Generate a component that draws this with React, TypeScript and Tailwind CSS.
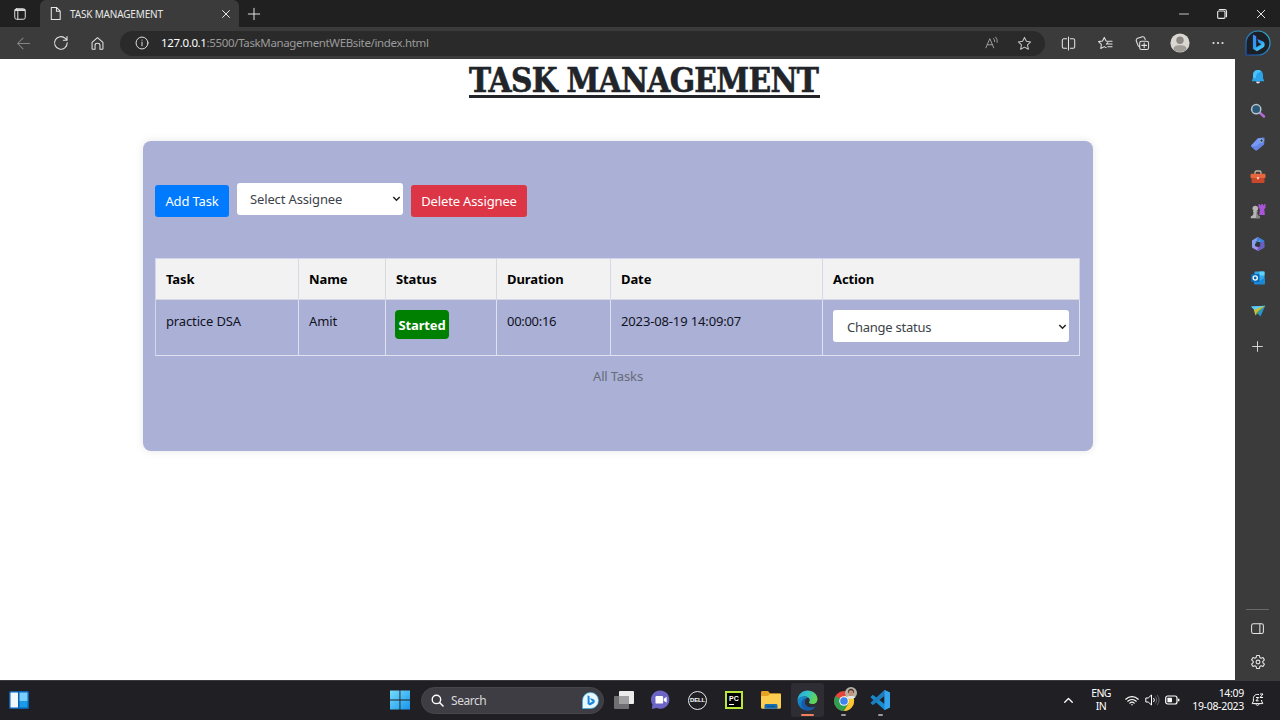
import React from "react";

type Children = { children?: React.ReactNode };

function Line({ children, size = 16, className = "" }: Children & { size?: number; className?: string }) {
  return (
    <svg width={size} height={size} viewBox="0 0 16 16" fill="none" stroke="currentColor" strokeWidth="1.1" strokeLinecap="round" strokeLinejoin="round" className={className}>
      {children}
    </svg>
  );
}

function ToolSlot({ children }: Children) {
  return <div className="flex w-[37px] items-center justify-center">{children}</div>;
}

function TabStrip() {
  return (
    <div className="flex h-[27px] shrink-0 bg-[#202020] text-[#e8e8e8]">
      <div className="flex w-10 items-center justify-center">
        <Line size={14}>
          <rect x="2" y="2" width="12" height="12" rx="2.2" />
          <path d="M2.5 4h11M2.5 3h11M5.5 5v9" />
        </Line>
      </div>
      <div className="flex w-[199px] items-center rounded-t-md bg-[#3b3b3b] pr-2 pl-2">
        <Line size={15}>
          <path d="M3.5 1.5h5.5l4 4v9H3.5zM9 1.5v4h4" />
        </Line>
        <span className="ml-[7px] flex-1 text-[10px] leading-[14px] tracking-[-0.17px] whitespace-nowrap">TASK MANAGEMENT</span>
        <Line size={10} className="shrink-0">
          <path d="M2.5 2.5l11 11M13.5 2.5l-11 11" strokeWidth="1.6" />
        </Line>
      </div>
      <div className="flex w-[30px] items-center justify-center">
        <Line size={14}>
          <path d="M8 1.5v13M1.5 8h13" />
        </Line>
      </div>
      <div className="ml-auto flex">
        <div className="flex w-[38px] items-center justify-center">
          <Line size={12}>
            <path d="M2 8h12" />
          </Line>
        </div>
        <div className="flex w-[38px] items-center justify-center">
          <Line size={12}>
            <rect x="2.2" y="4" width="9.8" height="9.8" rx="1.5" strokeWidth="1.5" />
            <path d="M4.5 2h7a2.5 2.5 0 0 1 2.5 2.5v7" strokeWidth="1.5" />
          </Line>
        </div>
        <div className="flex w-[39px] items-center justify-center">
          <Line size={12}>
            <path d="M3 3l10 10M13 3L3 13" strokeWidth="1.3" />
          </Line>
        </div>
      </div>
    </div>
  );
}

function BingGlyph() {
  return (
    <svg width="26" height="26" viewBox="0 0 26 26">
      <defs>
        <linearGradient id="ring" x1="0" y1="1" x2="1" y2="0">
          <stop offset="0" stopColor="#1454b8" />
          <stop offset="1" stopColor="#35b5cf" />
        </linearGradient>
        <linearGradient id="bing" x1="0" y1="0" x2="0.6" y2="1">
          <stop offset="0" stopColor="#3f86f5" />
          <stop offset="0.6" stopColor="#2b9cf2" />
          <stop offset="1" stopColor="#4ed0f4" />
        </linearGradient>
      </defs>
      <path d="M1 25V13A12 12 0 1 1 13 25Z" fill="#1c1f26" stroke="url(#ring)" strokeWidth="1.2" />
      <path d="M7.9 4.4l3.3 1.8v11l5.2-3-2.7-1.4-1.5-3.9 6 2.5c2 1.3 2 4.6 0 6l-6.300 3.800-4-2.500z" fill="url(#bing)" />
    </svg>
  );
}

function AddressBar() {
  return (
    <div className="flex h-8 shrink-0 items-center bg-[#3b3b3b] pl-[5px] text-[#e4e4e4]">
      <ToolSlot>
        <Line size={15} className="text-[#858585]">
          <path d="M14.5 8H1.8M7.5 2.2L1.7 8l5.8 5.8" />
        </Line>
      </ToolSlot>
      <ToolSlot>
        <Line size={16}>
          <path d="M14.2 7.8A6.3 6.3 0 1 1 12.3 3.4L14 5.1M14 1.6v3.6h-3.6" />
        </Line>
      </ToolSlot>
      <ToolSlot>
        <Line size={15}>
          <path d="M2.200 6.800L8 1.800l5.800 5V13.500c0 .4-.2.6-.6.6h-2.600V9.800c0-1.400-1-2-2.600-2s-2.600.6-2.600 2v4.300H2.800c-.4 0-.6-.2-.6-.6z" />
        </Line>
      </ToolSlot>
      <div className="ml-1 flex h-[25px] w-[925px] items-center rounded-full bg-[#2a2a2a]">
        <div className="flex w-[41px] items-center pl-[15px]">
          <Line size={14}>
            <circle cx="8" cy="8" r="6.8" />
            <path d="M8 7v4.2M8 4.6v.2" />
          </Line>
        </div>
        <span className="flex-1 text-[11.5px] leading-4 tracking-[-0.35px] whitespace-nowrap text-[#9b9b9b]">
          <span className="text-white">127.0.0.1</span>:5500/TaskManagementWEBsite/index.html
        </span>
        <div className="flex w-[33px] justify-center text-[#a0a0a0]">
          <Line size={14}>
            <path d="M1 13.5L5.5 3 10 13.5M2.6 10h5.8M9.8 2.8a4 4 0 0 1 1.3 3.6M12.2 1.2a7 7 0 0 1 1.8 6" />
          </Line>
        </div>
        <div className="mr-1 flex w-[33px] justify-center text-[#c4c4c4]">
          <Line size={15}>
            <path d="M8 1.5l2 4.2 4.6.6-3.4 3.2.9 4.6L8 11.9l-4.1 2.2.9-4.6L1.4 6.3 6 5.7z" />
          </Line>
        </div>
      </div>
      <div className="ml-[5px] flex">
        <ToolSlot>
          <Line size={15}>
            <path d="M6 3H3a1.6 1.6 0 0 0-1.6 1.6v6.8A1.6 1.6 0 0 0 3 13h3M10 3h3a1.6 1.6 0 0 1 1.6 1.6v6.8A1.6 1.6 0 0 1 13 13h-3M8 1v14" />
          </Line>
        </ToolSlot>
        <ToolSlot>
          <Line size={15}>
            <path d="M10.2 5.6l-1.6-.2L6.7 1.5 4.8 5.4l-4.2.6 3 3-.7 4.4L6.7 11.3l2 1.1M9 8.7L10.5 7M11 5.5h4M10.5 8.5H15M10.5 11.5H15" />
          </Line>
        </ToolSlot>
        <ToolSlot>
          <Line size={15}>
            <rect x="5" y="5.5" width="9.5" height="9" rx="2" />
            <path d="M9.8 7.5v5M7.3 10h5M4.900 11.600L3.400 10.500 1.400 5.400C1 4 1.600 3 2.800 2.500l5-1.600c1.300-.3 2.200.3 2.600 1.400l.5 1.400" />
          </Line>
        </ToolSlot>
        <ToolSlot>
          <svg width="20" height="20" viewBox="0 0 20 20">
            <circle cx="10" cy="10" r="9.6" fill="#dad6d2" />
            <circle cx="10" cy="7.3" r="3.7" fill="#8b8783" />
            <path d="M3.5 16.5c0-3 2-4.3 6.5-4.3s6.5 1.3 6.5 4.3a9.5 9.5 0 0 1-13 0z" fill="#a09c98" />
          </svg>
        </ToolSlot>
        <ToolSlot>
          <svg width="14" height="4" viewBox="0 0 14 4" fill="#e4e4e4" className="ml-[3px]">
            <circle cx="2.500" cy="2" r="1.100" />
            <circle cx="7" cy="2" r="1.100" />
            <circle cx="11.500" cy="2" r="1.100" />
          </svg>
        </ToolSlot>
      </div>
      <div className="flex flex-1 justify-center">
        <BingGlyph />
      </div>
    </div>
  );
}

function Caret() {
  return (
    <svg width="9" height="6" viewBox="0 0 9 6" fill="none" stroke="#222" strokeWidth="1.5">
      <path d="M1.300 1l3.200 3.200L7.700 1" />
    </svg>
  );
}

function SelectBox({ label, className }: { label: string; className: string }) {
  return (
    <button className={"flex items-center justify-between rounded-[3px] bg-white text-left text-[#3c424a] " + className}>
      <span>{label}</span>
      <Caret />
    </button>
  );
}

const heads = ["Task", "Name", "Status", "Duration", "Date", "Action"];

function TaskTable() {
  return (
    <table className="w-[925px] table-fixed border-separate border-spacing-0 border-t border-l border-[#d3d6ea] text-black">
      <colgroup>
        <col className="w-[143px]" />
        <col className="w-[87px]" />
        <col className="w-[111px]" />
        <col className="w-[114px]" />
        <col className="w-[212px]" />
        <col className="w-[257px]" />
      </colgroup>
      <thead>
        <tr className="h-[41px] bg-[#f2f2f2]">
          {heads.map((h) => (
            <th key={h} className="border-r border-b border-[#d6d8e2] p-0 pl-[10px] text-left font-bold tracking-[-0.1px]">
              {h}
            </th>
          ))}
        </tr>
      </thead>
      <tbody>
        <tr className="h-14 align-top text-[#11131f]">
          <td className="border-r border-b border-[#dfe1f0] p-0 pt-[11px] pl-[10px]">practice DSA</td>
          <td className="border-r border-b border-[#dfe1f0] p-0 pt-[11px] pl-[10px]">Amit</td>
          <td className="border-r border-b border-[#dfe1f0] p-0 pt-[10px] pl-[9px]">
            <div className="flex h-[29px] w-[54px] items-center justify-center rounded-[4px] bg-[#008000] font-bold text-white">Started</div>
          </td>
          <td className="border-r border-b border-[#dfe1f0] p-0 pt-[11px] pl-[10px] tracking-[-0.3px]">00:00:16</td>
          <td className="border-r border-b border-[#dfe1f0] p-0 pt-[11px] pl-[10px]">2023-08-19 14:09:07</td>
          <td className="border-r border-b border-[#dfe1f0] p-0 pt-[10px] pl-[10px]">
            <SelectBox label="Change status" className="h-8 w-[236px] pt-[2px] pr-[2px] pl-[14px] tracking-[-0.25px]" />
          </td>
        </tr>
      </tbody>
    </table>
  );
}

function Page() {
  return (
    <main className="w-[1235px] bg-white">
      <h1 className="ml-[469px] flex h-[82px] items-start">
        <span className="w-[351px] border-b-[3px] border-[#212529] pt-[8px] font-['DejaVu_Serif_Condensed','DejaVu_Serif',serif] text-[33px] leading-[28px] font-bold tracking-[-0.7px] whitespace-nowrap text-[#212529] [-webkit-text-stroke:0.6px_#212529]">TASK MANAGEMENT</span>
      </h1>
      <section className="ml-[143px] h-[310px] w-[950px] rounded-lg bg-[#abb0d6] px-3 pt-[42px] text-[13px] leading-5 tracking-[-0.14px] shadow-[0_0_8px_rgba(0,0,0,0.1)]">
        <div className="flex h-[75px] items-start gap-2">
          <button className="mt-[2px] h-8 w-[74px] rounded-[3px] bg-[#007bff] text-white">Add Task</button>
          <SelectBox label="Select Assignee" className="h-8 w-[166px] pr-[2px] pl-[13px]" />
          <button className="mt-[2px] h-8 w-[116px] rounded-[3px] bg-[#dc3545] text-white">Delete Assignee</button>
        </div>
        <TaskTable />
        <p className="mt-[10px] text-center text-[#666c78]">All Tasks</p>
      </section>
    </main>
  );
}

function SideSlot({ children }: Children) {
  return <div className="flex h-[33.4px] items-center justify-center">{children}</div>;
}

function Sidebar() {
  return (
    <aside className="flex flex-1 flex-col bg-[#3b3b3b] pt-[1.5px] text-[#e4e4e4]">
      <SideSlot>
        <svg width="14" height="16" viewBox="0 0 14 16">
          <path d="M5 12.5h4a2 2 0 0 1-4 0z" fill="#e0e4ea" />
          <path d="M7 1c3 0 5 2.2 5 5v3l1.3 3.2H.7L2 9V6c0-2.8 2-5 5-5z" fill="#2ba3ea" />
          <path d="M2 9V6c0-2.8 2-5 5-5 1.5 0 2.5.5 3.5 1.500C7 3 5 5 5 9z" fill="#4cc0f8" />
        </svg>
      </SideSlot>
      <SideSlot>
        <svg width="16" height="16" viewBox="0 0 16 16" fill="none">
          <path d="M9.500 9.500l4.500 4" stroke="#b06ad0" strokeWidth="2.600" strokeLinecap="round" />
          <circle cx="6.200" cy="6.200" r="4.600" fill="#2b5a78" stroke="#b8c4ca" strokeWidth="1.500" />
        </svg>
      </SideSlot>
      <SideSlot>
        <svg width="16" height="16" viewBox="0 0 16 16">
          <path d="M1.600 9L8 2.200l5.500-.7c.8 0 1.200.4 1.100 1.100l-.5 6-6.900 5.600c-.7.6-1.400.6-2 0L1.600 11c-.6-.7-.6-1.300 0-2z" fill="#6584e8" />
          <path d="M1.600 9L8 2.200l2.500-.3L14 4 6.600 10 1.500 10.500c-.3-.5-.3-1 .1-1.500z" fill="#7798f5" />
          <circle cx="11.500" cy="4.600" r="1.500" fill="#223058" stroke="#b5d5c8" strokeWidth=".7" />
        </svg>
      </SideSlot>
      <SideSlot>
        <svg width="16" height="16" viewBox="0 0 16 16">
          <path d="M5 5V3.600C5 2.600 5.600 2 6.600 2h2.800c1 0 1.600.6 1.600 1.600V5" fill="none" stroke="#c6b5a5" strokeWidth="1.300" />
          <rect x=".5" y="4.700" width="15" height="4.500" rx="1" fill="#e8663f" />
          <rect x="1.500" y="9" width="13" height="5" rx="1" fill="#c9472b" />
          <rect x="6.900" y="7.900" width="2.200" height="2.400" rx=".6" fill="#f4c9aa" />
        </svg>
      </SideSlot>
      <SideSlot>
        <svg width="16" height="16" viewBox="0 0 16 16">
          <path d="M8.500 1h1.400v1.300h1.400V1h1.600v1.300h1.300V1h1.300v4l-1.200 1 .6 6H9.200l.7-6-1.400-1z" fill="#aa54d8" />
          <circle cx="5.300" cy="5.500" r="2.800" fill="#b5b5b5" />
          <path d="M3 8h4.600v1l-.7.6.8 2.600 2 1.200v1.800H.8v-1.800l2-1.200.9-2.600L3 9z" fill="#b5b5b5" />
          <path d="M6.500 8h1.100v1l-.7.6.8 2.600 2 1.200v1.800H6z" fill="#858585" />
        </svg>
      </SideSlot>
      <SideSlot>
        <svg width="16" height="16" viewBox="0 0 16 16">
          <path d="M7.800 1L2 4.500v7L5 13.200V6.200l4.500-3z" fill="#8d9cf0" />
          <path d="M7.800 1l6.400 3.600v6.200l-4-2V5.800L6.500 4z" fill="#3c80d8" />
          <path d="M2 11.500L8 15l6.200-3.600V8.200L8.400 11.500 5 10v3z" fill="#b089e8" />
          <path d="M14.200 5v6.400L8 15l-1.400-.8 3.600-4.400V7z" fill="#6b5fc4" />
          <path d="M5 6.200l5.200-2v1.600L5 8z" fill="#48b9e8" />
          <path d="M8 5.600l2.200 1.200v2.500L8 10.500 5.800 9.300V6.800z" fill="#33343c" />
        </svg>
      </SideSlot>
      <SideSlot>
        <svg width="16" height="16" viewBox="0 0 16 16">
          <rect x="4.500" y="1.500" width="10" height="12" rx="1" fill="#33a9e8" />
          <path d="M9.500 1.500h5v4h-5z" fill="#62d0fa" />
          <path d="M4 8l5.500 3L15 7.500v6c0 .6-.4 1-1 1H5c-.6 0-1-.4-1-1z" fill="#1a88d4" />
          <rect x="1" y="4" width="8.500" height="8" rx="1" fill="#0869b8" />
          <circle cx="5.200" cy="8" r="2.100" fill="none" stroke="#fff" strokeWidth="1.300" />
        </svg>
      </SideSlot>
      <SideSlot>
        <svg width="16" height="16" viewBox="0 0 16 16">
          <path d="M1 3.500L15.300 2.800 10.400 13.500 7 9.500z" fill="#2395dc" />
          <path d="M1 3.500l14.300-.7L5.500 8z" fill="#5dcdf5" />
          <path d="M15.300 2.800L3.800 6.800l1.600 5.700L7.500 9z" fill="#c9bd40" />
          <path d="M15.300 2.800L7.200 9l-1.800 3.500 3-2.200z" fill="#4f9d5d" />
        </svg>
      </SideSlot>
      <div className="flex h-[38px] items-center justify-center">
        <Line size={13}>
          <path d="M8 2v12M2 8h12" />
        </Line>
      </div>
      <div className="mx-auto mt-auto h-px w-[23px] bg-[#686868]" />
      <div className="mt-[2px] flex h-[33px] items-center justify-center">
        <Line size={15}>
          <rect x="1.700" y="3" width="12.600" height="10.400" rx="2" />
          <path d="M10.500 3v10.400" />
        </Line>
      </div>
      <div className="mb-[2px] flex h-[33px] items-center justify-center">
        <Line size={16}>
          <circle cx="8" cy="8" r="1.900" />
          <path d="M6.600 1.500h2.800l.4 2 1.200.7 2-.7 1.400 2.400-1.600 1.400v1.400l1.600 1.400-1.400 2.400-2-.7-1.200.7-.4 2H6.600l-.4-2-1.200-.7-2 .7-1.400-2.400 1.600-1.400V7.300L1.600 5.900 3 3.500l2 .7 1.200-.7z" />
        </Line>
      </div>
    </aside>
  );
}

function TaskSlot({ children, className = "" }: Children & { className?: string }) {
  return <div className={"relative flex h-full w-[36.6px] items-center justify-center " + className}>{children}</div>;
}

function Taskbar() {
  return (
    <footer className="flex h-10 shrink-0 items-center border-t border-[#3a3a3c] bg-[#201f24] pb-px text-white">
      <svg width="20" height="18" viewBox="0 0 20 18" className="ml-[9px]">
        <rect width="20" height="18" rx="1.500" fill="#0c5fb0" />
        <rect x="1.500" y="1.500" width="7.500" height="15" rx=".5" fill="#f2f7fb" />
        <rect x="10.500" y="1.500" width="8" height="8.500" fill="#78d0fa" />
        <rect x="10.500" y="10" width="8" height="6.500" fill="#199be8" />
      </svg>
      <svg width="20" height="20" viewBox="0 0 20 20" className="ml-[361px]">
        <defs>
          <linearGradient id="win" x1="0" y1="0" x2="1" y2="1">
            <stop offset="0" stopColor="#76dcfb" />
            <stop offset="1" stopColor="#1694ec" />
          </linearGradient>
        </defs>
        <path d="M0 .5h9.500v9H0zM10.400.5H20v9h-9.600zM0 10.400h9.500v9.100H0zM10.400 10.400H20v9.100h-9.600z" fill="url(#win)" />
      </svg>
      <div className="ml-[11px] flex h-[27px] w-[183px] items-center rounded-full border border-[#47464b] bg-[#3e3d43] pr-[4px] pl-[9px]">
        <Line size={13}>
          <circle cx="6.700" cy="6.700" r="5.200" strokeWidth="1.700" />
          <path d="M10.800 10.800l4 4" strokeWidth="1.900" />
        </Line>
        <span className="ml-[7px] flex-1 pt-px text-[12px] leading-4 tracking-[-0.45px] text-[#d8d8da]">Search</span>
        <svg width="17" height="17" viewBox="0 0 17 17">
          <path d="M.5 16.500v-8a8 8 0 1 1 8 8z" fill="#e8f8fd" stroke="#3db3e8" strokeWidth=".7" />
          <path d="M5.600 3.200l2 1.100v6.600l3.300-1.700-1.800-1-.9-2.200 3.700 1.500c1.200.9 1.200 2.900 0 3.700l-3.900 2.300-2.400-1.400z" fill="#1985dc" />
        </svg>
      </div>
      <div className="ml-[2px] flex h-full">
        <TaskSlot>
          <svg width="20" height="18" viewBox="0 0 20 18">
            <rect x="5" width="15" height="13" rx="1" fill="#ececec" />
            <rect y="5" width="15" height="13" rx="1" fill="#707073" />
            <rect x="5" y="5" width="10" height="8" fill="#a1a1a3" />
          </svg>
        </TaskSlot>
        <TaskSlot>
          <svg width="20" height="20" viewBox="0 0 20 20">
            <path d="M.8 19l.7-4.300A9.200 9.200 0 1 1 5.400 18z" fill="#6c65c5" />
            <rect x="4.500" y="6" width="7.600" height="7.600" rx="1.200" fill="#fff" />
            <path d="M12.800 8.800l2.900-2v6l-2.900-2z" fill="#fff" />
          </svg>
        </TaskSlot>
        <TaskSlot>
          <div className="flex size-[19px] items-center justify-center rounded-full border-[1.5px] border-[#e8e8e8]">
            <span className="font-['Liberation_Sans'] text-[6px] leading-[6px] font-bold tracking-[-0.2px]">DELL</span>
          </div>
        </TaskSlot>
        <TaskSlot>
          <div className="flex size-[18px] flex-col items-start border-2 border-[#b8e83c] bg-black pt-[2px] pl-[2px]">
            <span className="font-['Liberation_Sans'] text-[7px] leading-[7px] font-bold">PC</span>
            <span className="mt-[2px] h-px w-[5px] bg-white" />
          </div>
        </TaskSlot>
        <TaskSlot>
          <svg width="20" height="18" viewBox="0 0 20 18">
            <path d="M0 1.500C0 .7.500 0 1.300 0H7l2 2.300h9.700c.8 0 1.300.5 1.300 1.300V9H0z" fill="#e5a325" />
            <path d="M0 5h7l2-2h9.700c.8 0 1.300.5 1.300 1.300v12c0 .9-.5 1.400-1.300 1.400H1.300c-.8 0-1.300-.5-1.300-1.400z" fill="#fbce50" />
            <path d="M3.500 17.700v-3c0-1 .6-1.700 1.600-1.700h9.800c1 0 1.600.7 1.600 1.700v3z" fill="#176db4" />
            <path d="M6 15.400h8" stroke="#0c518f" strokeWidth="1" />
          </svg>
        </TaskSlot>
        <TaskSlot>
          <div className="flex h-[34px] w-[33px] items-center justify-center rounded-[3px] bg-[#2e2d33]">
            <svg width="21" height="21" viewBox="0 0 21 21">
              <defs>
                <linearGradient id="edge-top" x1="0" y1="0" x2="1" y2="0.3">
                  <stop offset="0" stopColor="#2aa8e0" />
                  <stop offset="0.55" stopColor="#34c4c4" />
                  <stop offset="1" stopColor="#62d650" />
                </linearGradient>
                <linearGradient id="edge-low" x1="0" y1="0" x2="1" y2="1">
                  <stop offset="0" stopColor="#1694d8" />
                  <stop offset="1" stopColor="#144e9c" />
                </linearGradient>
              </defs>
              <path d="M.5 10C1 4.500 5.200.5 10.500.5c5.700 0 10 3.800 10 8.400 0 3-2.100 5-5 5-2.300 0-3.600-.8-3.600-1.500 0-.5.900-.9.900-2.200 0-2-1.900-3.800-5.100-3.800C4 6.400 1.600 8 .5 10z" fill="url(#edge-top)" />
              <path d="M.5 10c1.100-2 3.500-3.600 7.200-3.600 1.500 0 2.700.4 3.600 1-2.200.4-3.600 2.200-3.600 4.500 0 3.200 3 5.700 6.600 5.700 1.500 0 3-.5 4.200-1.200-1.700 2.500-4.600 4.100-8 4.100C4.800 20.500.5 16 .5 10z" fill="url(#edge-low)" />
              <path d="M7.700 11.900c0-1.500.6-2.800 1.600-3.600C6.500 8.600 4.500 11 4.500 13.800c0 3.400 2.500 6.200 5.800 6.700 3.400 0 6.300-1.600 8-4.100-1.200.7-2.700 1.200-4.200 1.200-3.500 0-6.400-2.500-6.400-5.700z" fill="#165aa9" />
            </svg>
          </div>
          <div className="absolute bottom-[3px] h-[2px] w-[13px] rounded-full bg-[#f0805c]" />
        </TaskSlot>
        <TaskSlot>
          <svg width="24" height="24" viewBox="0 0 24 24" className="mb-[3px] ml-[2px]">
            <circle cx="11" cy="14" r="10" fill="#e5453a" />
            <path d="M11 14L2.400 9A10 10 0 0 0 11 24l4.500-7.500z" fill="#2f9e4e" />
            <path d="M11 14l4.500 2.500L11 24a10 10 0 0 0 8.700-15H11z" fill="#fbc72e" />
            <circle cx="11" cy="14" r="4.800" fill="#f5f7f9" />
            <circle cx="11" cy="14" r="3.800" fill="#3e83ee" />
            <circle cx="18" cy="6" r="6" fill="#b8b0a6" />
            <path d="M14.900 6c0-3 1.100-4.300 3.100-4.300s3.100 1.300 3.100 4.300z" fill="#3d3431" />
            <ellipse cx="18" cy="6.300" rx="2.400" ry="3.100" fill="#c69178" />
            <path d="M13.500 10c1.500-1.500 7.500-1.500 9 0a6 6 0 0 1-9 0z" fill="#e6e6e4" />
          </svg>
          <div className="absolute bottom-[3px] h-[2px] w-[5px] rounded-full bg-[#9b9b9e]" />
        </TaskSlot>
        <TaskSlot>
          <svg width="20" height="20" viewBox="0 0 20 20">
            <path d="M14.500 0L20 2.500v15L14.500 20 1 7.800c-.5-.4-.5-1 0-1.400l1.100-1c.4-.4.9-.4 1.300-.1L14.500 14z" fill="#168bd0" />
            <path d="M14.500 6L3.400 14.700c-.4.3-.9.3-1.300-.1l-1.100-1c-.5-.4-.5-1 0-1.400L14.500 0z" fill="#1c7cbc" />
            <path d="M14.500 0L20 2.500v15L14.500 20z" fill="#36a5ed" />
          </svg>
          <div className="absolute bottom-[3px] h-[2px] w-[5px] rounded-full bg-[#9b9b9e]" />
        </TaskSlot>
      </div>
      <div className="ml-auto flex items-center pr-4">
        <Line size={11}>
          <path d="M2.500 10.500L8 5l5.500 5.500" strokeWidth="1.900" />
        </Line>
        <div className="ml-[16px] w-[22px] text-center text-[10.5px] leading-[13px] tracking-[-0.6px]">
          ENG
          <br />
          IN
        </div>
        <svg width="14" height="11" viewBox="0 0 14 11" fill="none" stroke="#fff" strokeLinecap="round" strokeWidth="1.200" className="ml-[13px]">
          <path d="M.8 4.200a8.800 8.800 0 0 1 12.400 0M2.800 6.200a6 6 0 0 1 8.400 0M4.800 8.100a3.200 3.200 0 0 1 4.400 0" />
          <circle cx="7" cy="9.700" r=".7" fill="#fff" stroke="none" />
        </svg>
        <svg width="15" height="12" viewBox="0 0 15 12" fill="none" stroke="#fff" strokeLinejoin="round" className="ml-[6px]">
          <path d="M.8 4h2.400l3.300-3v10L3.200 8H.8z" />
          <path d="M8.500 4a3 3 0 0 1 0 4" />
          <path d="M10.300 2.500a5 5 0 0 1 0 7M12 1a7 7 0 0 1 0 10" stroke="#65656a" />
        </svg>
        <svg width="15" height="10" viewBox="0 0 15 10" fill="none" stroke="#fff" className="ml-[5px]">
          <rect x=".7" y="1" width="11.300" height="8" rx="2" strokeWidth="1.200" />
          <rect x="2.400" y="2.700" width="4.600" height="4.600" rx=".6" fill="#fff" stroke="none" />
          <path d="M13.700 3.700v2.600" strokeWidth="1.400" />
        </svg>
        <div className="w-[64px] text-right text-[10.5px] leading-[13px] tracking-[-0.3px] whitespace-nowrap">
          14:09
          <br />
          19-08-2023
        </div>
        <svg width="13" height="14" viewBox="0 0 13 14" fill="none" stroke="#fff" strokeLinejoin="round" className="ml-[7px]">
          <path d="M8 1.600C4.600.8 2.400 2.800 2.400 5.500v2.600L1.200 10.600h10.600l-1.200-2.500V7M5 11.200c.4 1.600 2.600 1.600 3 0" />
          <path d="M9 1h3L9 4.500h3M5 4.500h2.600L5 7.800h2.600" />
        </svg>
      </div>
    </footer>
  );
}

export default function App() {
  return (
    <div className="flex h-[720px] w-[1280px] flex-col overflow-hidden bg-white font-['Noto_Sans',sans-serif]">
      <TabStrip />
      <AddressBar />
      <div className="flex min-h-0 flex-1">
        <Page />
        <Sidebar />
      </div>
      <Taskbar />
    </div>
  );
}
